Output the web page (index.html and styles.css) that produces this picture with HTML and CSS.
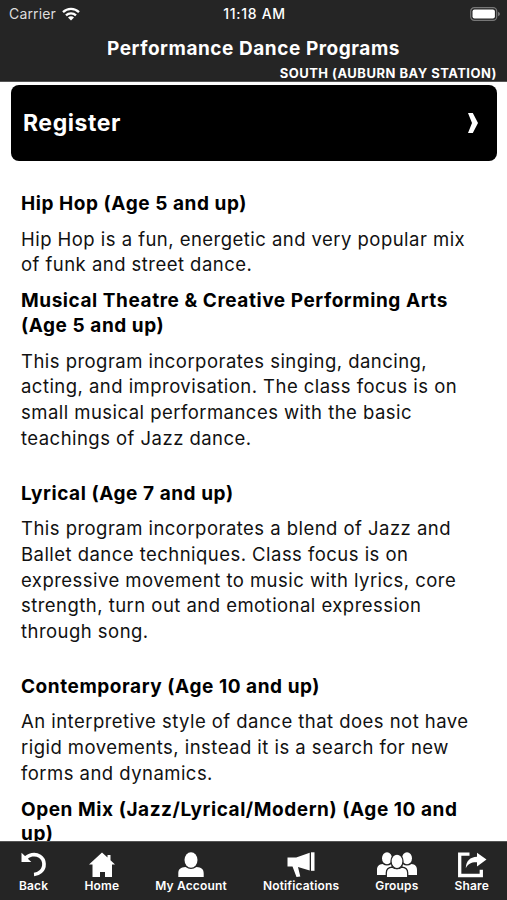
FILE: index.html
```html
<!DOCTYPE html>
<html lang="en">
<head>
  <meta charset="UTF-8">
  <meta name="viewport" content="width=device-width, initial-scale=1.0">
  <title>Performance Dance Programs</title>
  <link rel="stylesheet" href="styles.css">
</head>
<body>
  <div class="app">
    <header class="header">
      <div class="status-bar">
        <div class="carrier">
          <span>Carrier</span>
          <svg class="wifi" viewBox="0 0 18 14" fill="none" stroke="#fff" stroke-width="2.3">
            <path d="M1 5.2a11.5 11.5 0 0 1 16 0M4 8.4a7.2 7.2 0 0 1 10 0"/>
            <path d="M9 13.6L6 10.6a4.2 4.2 0 0 1 6 0z" fill="#fff" stroke="none"/>
          </svg>
        </div>
        <span class="time">11:18 AM</span>
        <svg class="battery" viewBox="0 0 30 14">
          <rect x=".7" y=".7" width="26" height="12.6" rx="3.6" fill="none" stroke="#777" stroke-width="1.2"/>
          <rect x="2.5" y="2.5" width="22.4" height="9" rx="2" fill="#fff"/>
          <path d="M28 4.8q2 .7 2 2.2t-2 2.2z" fill="#777"/>
        </svg>
      </div>
      <h1 class="title">Performance Dance Programs</h1>
      <div class="location">SOUTH (AUBURN BAY STATION)</div>
    </header>

    <main class="content">
      <a class="register">
        <span>Register</span>
        <svg class="chevron" viewBox="0 0 10 20"><path d="M0 0h4.8L10 10 4.8 20H0l4-10z" fill="#fff"/></svg>
      </a>

      <div class="programs">
        <h2>Hip Hop (Age 5 and up)</h2>
        <p>Hip Hop is a fun, energetic and very popular mix of funk and street dance.</p>
        <h2>Musical Theatre &amp; Creative Performing Arts (Age 5 and up)</h2>
        <p class="spaced">This program incorporates singing, dancing, acting, and improvisation. The class focus is on small musical performances with the basic teachings of Jazz dance.</p>
        <h2>Lyrical (Age 7 and up)</h2>
        <p class="spaced">This program incorporates a blend of Jazz and Ballet dance techniques. Class focus is on expressive movement to music with lyrics, core strength, turn out and emotional expression through song.</p>
        <h2>Contemporary (Age 10 and up)</h2>
        <p>An interpretive style of dance that does not have rigid movements, instead it is a search for new forms and dynamics.</p>
        <h2>Open Mix (Jazz/Lyrical/Modern) (Age 10 and up)</h2>
      </div>
    </main>

    <nav class="tab-bar">
      <a class="tab">
        <svg width="26" height="26" viewBox="0 0 26 26">
          <path d="M4 7C7.5 2.5 14 1.2 18.800 4.200c5.400 3.500 5.500 11.500.9 15.500-1.900 1.700-4 2.600-6.700 2.800" fill="none" stroke="#fff" stroke-width="3.7"/>
          <path d="M.5.8v9.2h9.8z" fill="#fff"/>
        </svg>
        <span>Back</span>
      </a>
      <a class="tab">
        <svg width="26" height="26" viewBox="0 0 26 26">
          <path d="M13 .5l5.5 5V3h3v5.2L26 12.5h-3V25h-7v-5h-5v5H3.5V12.5H0z" fill="#fff"/>
        </svg>
        <span>Home</span>
      </a>
      <a class="tab">
        <svg width="26" height="26" viewBox="0 0 26 26">
          <ellipse cx="13" cy="8" rx="6.5" ry="7.8" fill="#fff"/>
          <path d="M.3 25v-3.5c0-4.5 2.5-6.3 7.2-6.5q5.5 4.2 11 0c4.7.2 7.2 2 7.2 6.500V25z" fill="#fff"/>
        </svg>
        <span>My Account</span>
      </a>
      <a class="tab">
        <svg width="28" height="26" viewBox="0 0 28 26" fill="#fff">
          <path d="M.5 5.5h8.7L22.700.8v17.700L11 15l2.300 9.500-3.800.6L5.500 14.500h-5z"/>
          <path d="M24 .3h3.5v18.5H24z"/>
        </svg>
        <span>Notifications</span>
      </a>
      <a class="tab">
        <svg width="40" height="26" viewBox="0 0 40 26" fill="#fff">
          <ellipse cx="10" cy="6.2" rx="5" ry="6"/>
          <ellipse cx="30" cy="6.2" rx="5" ry="6"/>
          <path d="M0 23v-5c0-4 2-5.5 5.5-6q4.500 3 9 0v11zM40 23v-5c0-4-2-5.500-5.500-6q-4.500 3-9 0v11z"/>
          <g stroke="#252525" stroke-width="1.3">
            <path d="M9.3 25.7V21c0-4 2-5.500 6-5.800q4.700 3 9.400 0c4 .3 6 1.800 6 5.800v4.700z"/>
            <ellipse cx="20" cy="9.3" rx="6" ry="7.3"/>
          </g>
        </svg>
        <span>Groups</span>
      </a>
      <a class="tab">
        <svg width="30" height="26" viewBox="0 0 30 26">
          <path d="M12.5 2.2H2.7v21.3h21.6v-5.7" fill="none" stroke="#fff" stroke-width="3.3"/>
          <path d="M20 .8L29.500 7.500 20 14.500v-4.200C14.500 10 11 12 8.800 16.200 9 9 13 5 20 4.700z" fill="#fff"/>
        </svg>
        <span>Share</span>
      </a>
    </nav>
  </div>
</body>
</html>
```
FILE: styles.css
```css
* {
  box-sizing: border-box;
}
body {
  margin: 0;
  font-family: Inter, sans-serif;
  background: #fff;
  color: #111;
}
.app {
  display: flex;
  flex-direction: column;
  height: 900px;
  overflow: hidden;
}
.header {
  flex: none;
  height: 82px;
  background: #252525;
  border-bottom: 1px solid #555;
  color: #fff;
}
.status-bar {
  display: grid;
  grid-template-columns: 1fr auto 1fr;
  align-items: center;
  height: 27px;
  padding: 0 7px 0 9px;
  font-size: 14px;
}
.carrier {
  display: flex;
  align-items: center;
  gap: 6px;
  color: #ddd;
  letter-spacing: 0.15px;
}
.wifi {
  width: 18px;
  height: 14px;
}
.time {
  font-weight: 500;
  letter-spacing: 0.7px;
}
.battery {
  width: 30px;
  height: 14px;
  justify-self: end;
}
.title {
  margin: 9px 0 0;
  font-size: 19px;
  font-weight: 700;
  line-height: 26px;
  text-align: center;
  letter-spacing: 0.55px;
}
.location {
  margin-top: 3px;
  padding-right: 10px;
  font-size: 13px;
  font-weight: 700;
  line-height: 16px;
  text-align: right;
  letter-spacing: 0.48px;
}
.content {
  flex: 1;
  min-height: 0;
  overflow: hidden;
  padding-top: 3px;
}
.register {
  display: flex;
  align-items: center;
  justify-content: space-between;
  height: 76px;
  margin: 0 10px 0 11px;
  padding: 0 19px 0 12px;
  border-radius: 8px;
  background: #000;
  color: #fff;
  font-size: 23px;
  font-weight: 700;
  letter-spacing: 0.55px;
}
.chevron {
  width: 10px;
  height: 20px;
}
.programs {
  padding: 31px 21px 0;
}
.programs h2 {
  margin: 0;
  font-size: 19px;
  font-weight: 700;
  line-height: 24.7px;
  letter-spacing: 0.56px;
  color: #000;
}
.programs p {
  margin: 10px 0 11.2px;
  font-size: 18.5px;
  line-height: 25.7px;
  letter-spacing: 0.46px;
}
.programs p.spaced {
  margin-bottom: 30px;
}
.tab-bar {
  flex: none;
  display: flex;
  justify-content: space-between;
  height: 59px;
  padding: 10px 18px 0 19px;
  background: #252525;
  border-top: 1px solid #555;
  color: #fff;
}
.tab {
  display: flex;
  flex-direction: column;
  align-items: center;
  font-size: 12px;
  font-weight: 600;
  letter-spacing: 0.15px;
}
.tab span {
  line-height: 16px;
}
```
